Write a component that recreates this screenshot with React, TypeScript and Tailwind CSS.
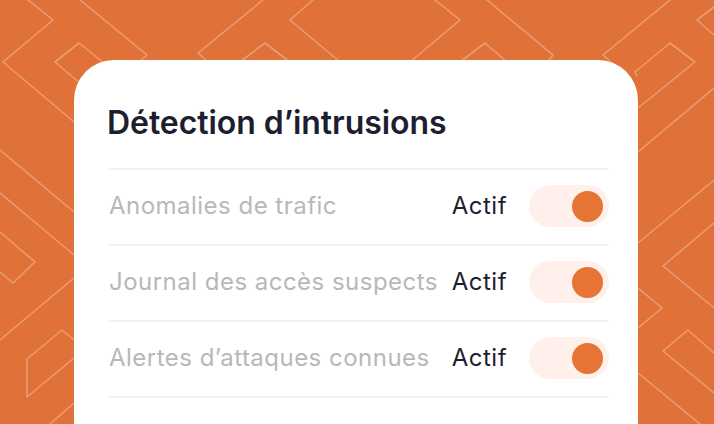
import React from "react";

const lines: string[] = [
  "28,0 53,20 3,62 80,127",
  "80,0 147,55 100,95",
  "110,68 79,43 55,62 100,100",
  "263,0 198,53 215,68",
  "313,0 290,20 340,62",
  "240,62 265,43 290,62",
  "435,0 460,20 410,62",
  "460,62 485,43 507,62",
  "487,0 553,55 545,65",
  "670,0 603,55 620,70",
  "638,108 695,62 670,43 635,72 637,76",
  "714,7 697,20 714,35",
  "714,88 638,152",
  "714,180 638,243",
  "714,223 663,266 714,308",
  "638,288 662,308 638,328",
  "714,353 688,330 663,351 714,393",
  "638,373 700,424",
  "0,150 74,212",
  "0,193 74,255",
  "0,232 35,262 13,283 0,272",
  "74,278 0,340",
  "74,340 62,330 27,359 27,397 74,358",
  "74,403 50,424",
];

function Pattern() {
  return (
    <svg
      className="absolute inset-0 h-full w-full"
      viewBox="0 0 714 424"
      preserveAspectRatio="none"
      fill="none"
    >
      {lines.map((p, i) => (
        <polyline
          key={i}
          points={p}
          stroke="rgba(255,255,255,0.3)"
          strokeWidth="1.6"
          strokeLinejoin="round"
          strokeLinecap="round"
        />
      ))}
    </svg>
  );
}

function Toggle() {
  return (
    <div className="flex h-[42px] w-[80px] items-center justify-end rounded-full bg-[#fff0eb] pr-[6px]">
      <div className="h-[31px] w-[31px] rounded-full bg-[#e57435]" />
    </div>
  );
}

const rows = ["Anomalies de trafic", "Journal des accès suspects", "Alertes d’attaques connues"];

export default function App() {
  return (
    <div
      className="relative h-[424px] w-[714px] overflow-hidden bg-[#e07239]"
      style={{ fontFamily: "Inter, 'Noto Sans', sans-serif" }}
    >
      <Pattern />
      <div className="relative ml-[74px] mt-[60px] h-[420px] w-[564px] rounded-t-[40px] bg-white pl-[35px] pr-[29px] pt-[44px]">
        <h1 className="-ml-[2px] text-[32px] font-semibold leading-[38px] tracking-[-0.002em] text-[#1d1e30]">
          Détection d’intrusions
        </h1>
        <div className="mt-[26px]">
          {rows.map((r) => (
            <div key={r} className="border-t-2 border-[#f2f2f2]">
              <div className="flex items-center pt-[15px] pb-[17px]">
                <span className="flex-1 whitespace-nowrap text-[24px] leading-[28px] tracking-[0.02em] text-[#b8b8b8]">
                  {r}
                </span>
                <span className="ml-[8px] text-[24px] leading-[28px] tracking-[0.02em] text-[#1d1e30]">Actif</span>
                <div className="ml-[22px]">
                  <Toggle />
                </div>
              </div>
            </div>
          ))}
          <div className="border-t-2 border-[#f2f2f2]" />
        </div>
      </div>
    </div>
  );
}
